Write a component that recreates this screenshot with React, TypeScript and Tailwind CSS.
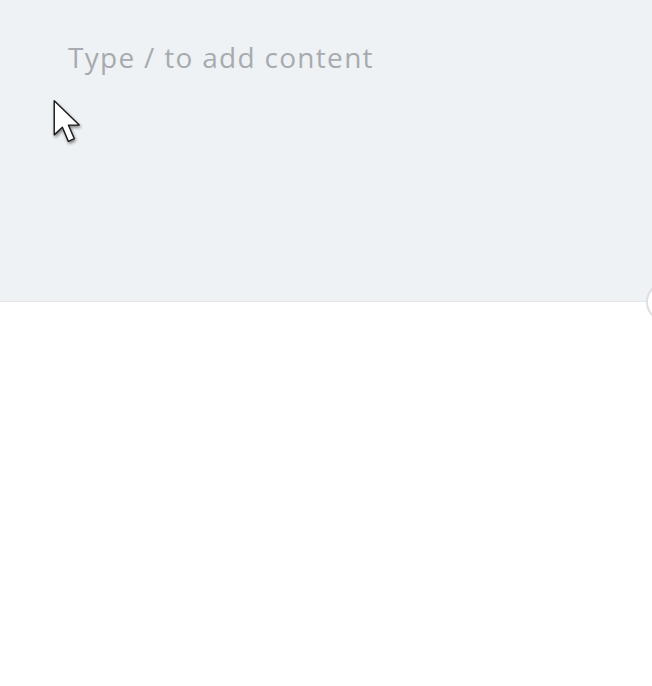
import React from "react"

function Cursor() {
  return (
    <svg
      className="absolute left-[52px] top-[99px]"
      width="36"
      height="50"
      viewBox="0 0 32 46"
      style={{ filter: "drop-shadow(1px 2px 1.5px rgba(0,0,0,0.45))" }}
    >
      <path
        d="M1.5 1.5 L1.5 33 L9 26 L14.5 39 L20 36.5 L14.5 24 L24.5 24 Z"
        fill="#ffffff"
        stroke="#1a1a1a"
        strokeWidth="1.3"
        strokeLinejoin="round"
      />
    </svg>
  )
}

export default function App() {
  return (
    <div className="relative h-[686px] w-[652px] overflow-hidden bg-white font-['Open_Sans',sans-serif]">
      <div className="h-[302px] border-b border-[#e2e6ea] bg-[#eff2f5] pl-[68px] pt-[38px]">
        <div className="text-[28px] leading-[38px] tracking-[1.3px] text-[#a7abaf]">
          Type / to add content
        </div>
      </div>
      <div className="absolute left-[646px] top-[282px] h-[40px] w-[40px] rounded-full border-2 border-[#dcdfe3] bg-white" />
      <Cursor />
    </div>
  )
}
